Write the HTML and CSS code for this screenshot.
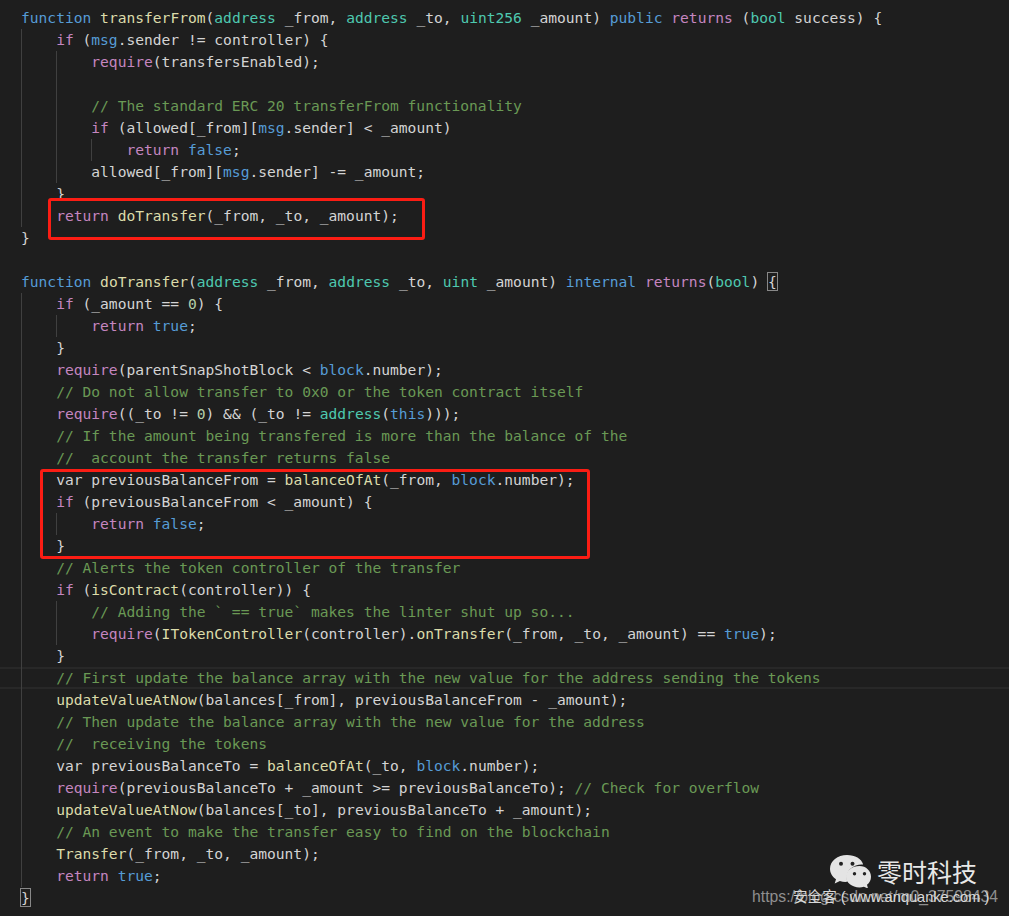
FILE: index.html
```html
<!DOCTYPE html>
<html lang="en">
<head>
<meta charset="utf-8">
<title>doTransfer</title>
<link rel="stylesheet" href="styles.css">
</head>
<body>
<main class="editor">
<div class="code">
<div class="line"><span class="b">function</span> <span class="f">transferFrom</span>(<span class="t">address</span> _from, <span class="t">address</span> _to, <span class="t">uint256</span> _amount) <span class="b">public</span> <span class="k">returns</span> (<span class="t">bool</span> success) {</div>
<div class="line"><span class="ind"></span><span class="k">if</span> (<span class="b">msg</span>.sender != controller) {</div>
<div class="line"><span class="ind"></span><span class="ind"></span><span class="k">require</span>(transfersEnabled);</div>
<div class="line"><span class="ind"></span><span class="ind"></span></div>
<div class="line"><span class="ind"></span><span class="ind"></span><span class="c">// The standard ERC 20 transferFrom functionality</span></div>
<div class="line"><span class="ind"></span><span class="ind"></span><span class="k">if</span> (allowed[_from][<span class="b">msg</span>.sender] &lt; _amount)</div>
<div class="line"><span class="ind"></span><span class="ind"></span><span class="ind"></span><span class="k">return</span> <span class="b">false</span>;</div>
<div class="line"><span class="ind"></span><span class="ind"></span>allowed[_from][<span class="b">msg</span>.sender] -= _amount;</div>
<div class="line"><span class="ind"></span>}</div>
<div class="line"><span class="ind"></span><span class="k">return</span> <span class="f">doTransfer</span>(_from, _to, _amount);</div>
<div class="line">}</div>
<div class="line"></div>
<div class="line"><span class="b">function</span> <span class="f">doTransfer</span>(<span class="t">address</span> _from, <span class="t">address</span> _to, <span class="t">uint</span> _amount) <span class="b">internal</span> <span class="k">returns</span>(<span class="t">bool</span>) <span class="match">{</span></div>
<div class="line"><span class="ind"></span><span class="k">if</span> (_amount == <span class="n">0</span>) {</div>
<div class="line"><span class="ind"></span><span class="ind"></span><span class="k">return</span> <span class="b">true</span>;</div>
<div class="line"><span class="ind"></span>}</div>
<div class="line"><span class="ind"></span><span class="k">require</span>(parentSnapShotBlock &lt; <span class="b">block</span>.number);</div>
<div class="line"><span class="ind"></span><span class="c">// Do not allow transfer to 0x0 or the token contract itself</span></div>
<div class="line"><span class="ind"></span><span class="k">require</span>((_to != <span class="n">0</span>) &amp;&amp; (_to != <span class="t">address</span>(<span class="b">this</span>)));</div>
<div class="line"><span class="ind"></span><span class="c">// If the amount being transfered is more than the balance of the</span></div>
<div class="line"><span class="ind"></span><span class="c">//  account the transfer returns false</span></div>
<div class="line"><span class="ind"></span>var previousBalanceFrom = <span class="f">balanceOfAt</span>(_from, <span class="b">block</span>.number);</div>
<div class="line"><span class="ind"></span><span class="k">if</span> (previousBalanceFrom &lt; _amount) {</div>
<div class="line"><span class="ind"></span><span class="ind"></span><span class="k">return</span> <span class="b">false</span>;</div>
<div class="line"><span class="ind"></span>}</div>
<div class="line"><span class="ind"></span><span class="c">// Alerts the token controller of the transfer</span></div>
<div class="line"><span class="ind"></span><span class="k">if</span> (<span class="f">isContract</span>(controller)) {</div>
<div class="line"><span class="ind"></span><span class="ind"></span><span class="c">// Adding the ` == true` makes the linter shut up so...</span></div>
<div class="line"><span class="ind"></span><span class="ind"></span><span class="k">require</span>(<span class="f">ITokenController</span>(controller).<span class="f">onTransfer</span>(_from, _to, _amount) == <span class="b">true</span>);</div>
<div class="line"><span class="ind"></span>}</div>
<div class="line current"><span class="ind"></span><span class="c">// First update the balance array with the new value for the address sending the tokens</span></div>
<div class="line"><span class="ind"></span><span class="f">updateValueAtNow</span>(balances[_from], previousBalanceFrom - _amount);</div>
<div class="line"><span class="ind"></span><span class="c">// Then update the balance array with the new value for the address</span></div>
<div class="line"><span class="ind"></span><span class="c">//  receiving the tokens</span></div>
<div class="line"><span class="ind"></span>var previousBalanceTo = <span class="f">balanceOfAt</span>(_to, <span class="b">block</span>.number);</div>
<div class="line"><span class="ind"></span><span class="k">require</span>(previousBalanceTo + _amount &gt;= previousBalanceTo); <span class="c">// Check for overflow</span></div>
<div class="line"><span class="ind"></span><span class="f">updateValueAtNow</span>(balances[_to], previousBalanceTo + _amount);</div>
<div class="line"><span class="ind"></span><span class="c">// An event to make the transfer easy to find on the blockchain</span></div>
<div class="line"><span class="ind"></span><span class="f">Transfer</span>(_from, _to, _amount);</div>
<div class="line"><span class="ind"></span><span class="k">return</span> <span class="b">true</span>;</div>
<div class="line"><span class="match">}</span></div>
</div>
<div class="mark mark-one"></div>
<div class="mark mark-two"></div>
<div class="brand">
<svg class="wechat" width="41" height="33" viewBox="0 0 41 33" aria-hidden="true">
<path class="bubble" d="M17 0C7.6 0 0 6 0 13.800c0 4.400 2.400 8 6 10.400L4.700 28.600 9.900 26c1.800.5 3.600.9 5.600.9.600 0 1.400 0 2-.1-.5-1.400-.8-2.900-.8-4.400 0-7.500 6.800-13 15-13 .5 0 1 0 1.500.1C31.600 3.800 25 0 17 0Z"/>
<circle class="eye" cx="11" cy="8.700" r="2"/>
<circle class="eye" cx="22.500" cy="8.700" r="2"/>
<path class="bubble" d="M29.500 11C22 11 16 15.800 16 21.700S22 32.400 29.500 32.400c1.500 0 3-.2 4.400-.6L38 33.500l-1-3.700c2.500-2 4-4.800 4-8.100C41 15.800 36 11 29.500 11Z"/>
<circle class="eye" cx="24.500" cy="18.700" r="1.700"/>
<circle class="eye" cx="34.500" cy="18.700" r="1.700"/>
</svg>
<span class="brand-name">零时科技</span>
</div>
<div class="url">https://blog.csdn.net/m0_37598434</div>
<div class="source">安全客 ( www.anquanke.com )</div>
</main>
</body>
</html>
```

FILE: styles.css
```css
html, body {
  margin: 0;
  padding: 0;
  background: #1e1e1e;
}

.editor {
  position: relative;
  width: 1009px;
  height: 916px;
  overflow: hidden;
  background: #1e1e1e;
  color: #d4d4d4;
}

.code {
  padding: 7px 0 0 21px;
  font-family: "DejaVu Sans Mono", monospace;
  font-size: 14.6px;
  line-height: 22px;
}

.line {
  height: 22px;
  white-space: pre;
}

.current {
  margin-left: -21px;
  padding-left: 21px;
  box-shadow: inset 0 2px 0 #282828, inset 0 -2px 0 #282828;
}

.ind {
  display: inline-block;
  width: 4ch;
  height: 22px;
  vertical-align: top;
  box-shadow: inset 1px 0 0 #404040;
}

.b { color: #569cd6; }
.k { color: #c586c0; }
.t { color: #4ec9b0; }
.f { color: #dcdcaa; }
.c { color: #6a9955; }
.n { color: #b5cea8; }

.match {
  outline: 1px solid #888888;
  outline-offset: 0;
}

.mark {
  position: absolute;
  box-sizing: border-box;
  border: 3px solid #fb1d14;
  border-radius: 3px;
}

.mark-one {
  left: 48px;
  top: 198px;
  width: 377px;
  height: 42px;
}

.mark-two {
  left: 40px;
  top: 469px;
  width: 550px;
  height: 90px;
}

.brand {
  position: absolute;
  left: 830px;
  top: 853px;
  display: flex;
  align-items: center;
  gap: 6px;
}

.bubble { fill: #e4e4e4; }
.eye { fill: #222222; }

.brand-name {
  font-family: "Noto Sans CJK SC", sans-serif;
  font-size: 25px;
  line-height: 36px;
  color: #e8e8e8;
}

.url,
.source {
  position: absolute;
  top: 888px;
  line-height: 18px;
  white-space: nowrap;
}

.url {
  left: 752px;
  font-family: "Liberation Sans", sans-serif;
  font-size: 15.75px;
  color: #8f8f8f;
}

.source {
  left: 793px;
  font-family: "Liberation Sans", "Noto Sans CJK SC", sans-serif;
  font-size: 14.6px;
  color: #d8d8d8;
}
```
